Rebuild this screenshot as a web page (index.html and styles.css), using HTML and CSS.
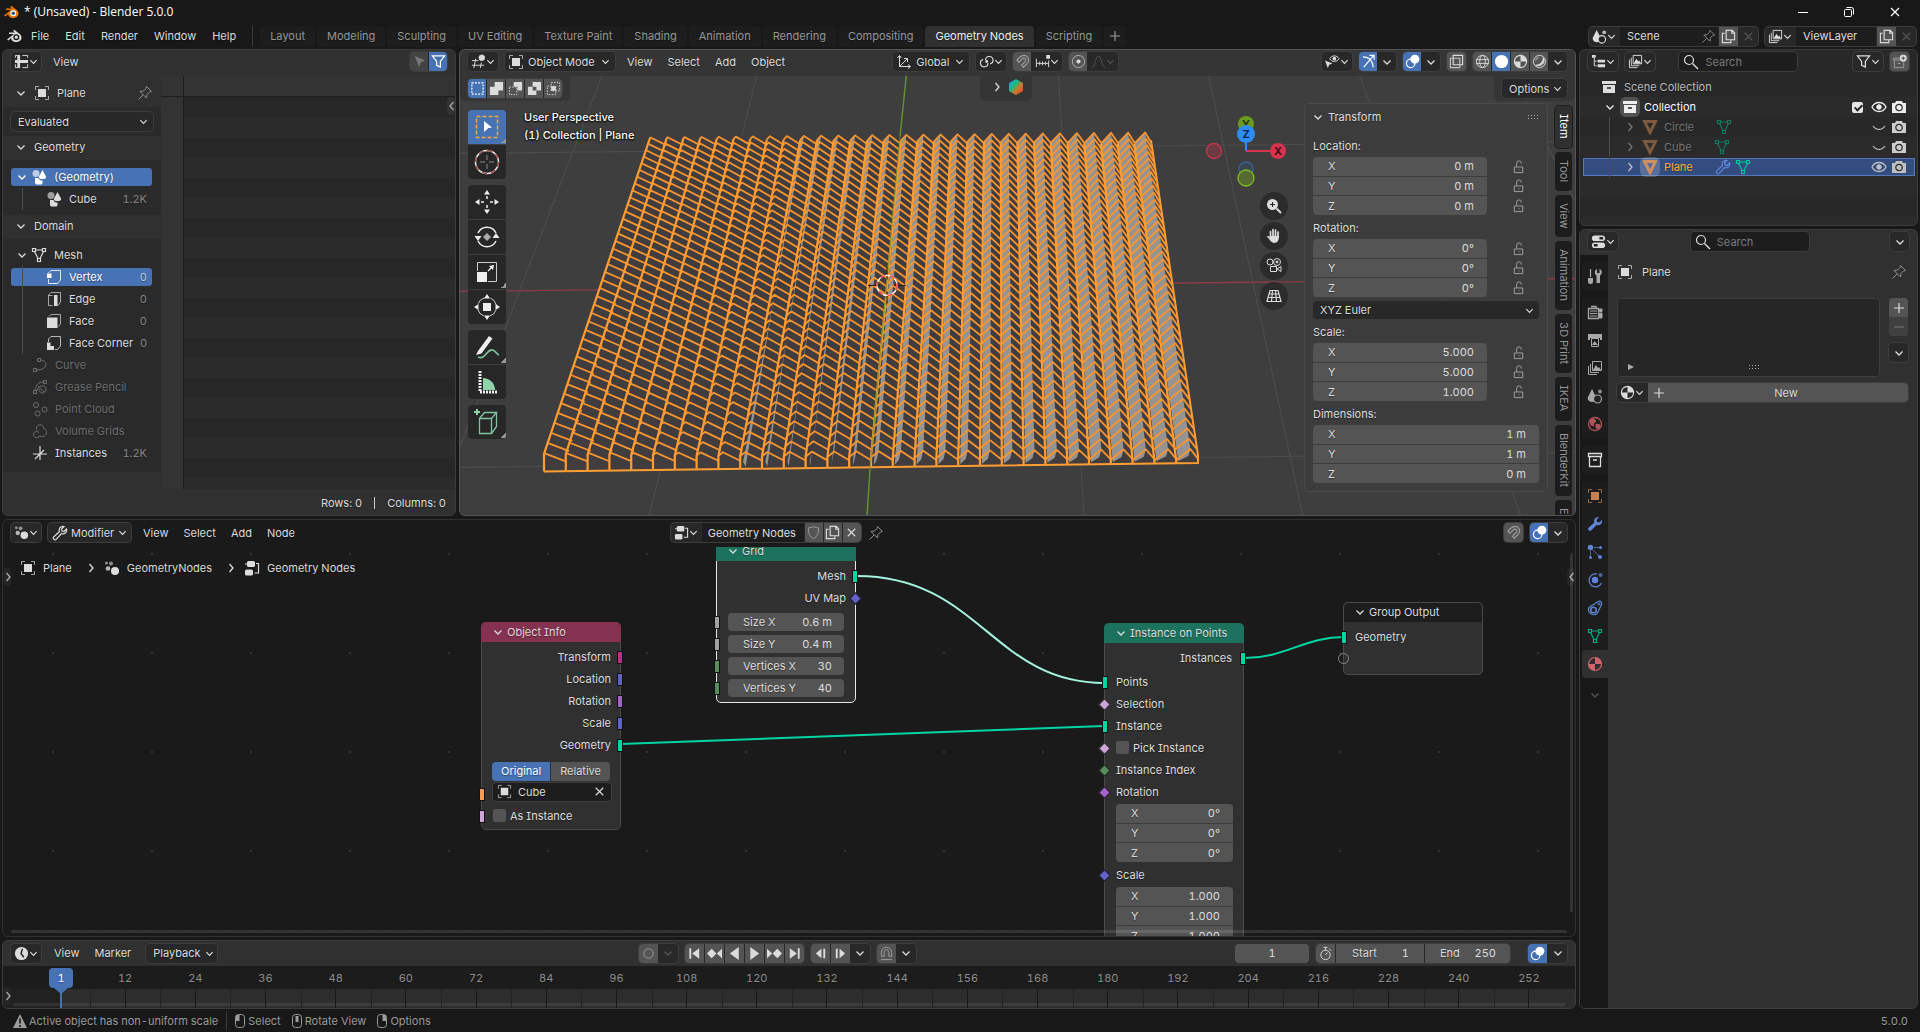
FILE: index.html
```html
<!DOCTYPE html>
<html lang="en">
<head>
<meta charset="utf-8">
<title>* (Unsaved) - Blender 5.0.0</title>
<link rel="stylesheet" href="styles.css">
</head>
<body>
<svg class="defs" aria-hidden="true">
<symbol id="chev" viewBox="0 0 10 10"><path d="M1.500 3.500 5 7l3.500-3.500" stroke-width="1.300"/></symbol>
<symbol id="right" viewBox="0 0 10 10"><path d="M3.500 1 7 5 3.500 9" stroke-width="1.300"/></symbol>
<symbol id="left" viewBox="0 0 10 10"><path d="M6.500 1 3 5l3.500 4" stroke-width="1.300"/></symbol>
<symbol id="blender" viewBox="0 0 16 16"><path d="M1 11.500 8 6H3V4.500h6L7 3l1.300-1.200 6 4.700c2.500 2.500 1.200 7.500-4 7.500-3.500 0-5-2-5.200-4L2.500 12.500z" fill="currentColor" stroke="none"/><circle cx="10.300" cy="9.200" r="3" fill="#181818" stroke="none"/><circle cx="10.300" cy="9.200" r="1.600" fill="currentColor" stroke="none"/></symbol>
<symbol id="logo" viewBox="0 0 16 16"><path d="M1 11.500 8 6H3V4.500h6L7 3l1.300-1.200 6 4.700c2.500 2.500 1.200 7.500-4 7.500-3.500 0-5-2-5.200-4L2.500 12.500z" fill="#ea7600" stroke="none"/><circle cx="10.300" cy="9.200" r="3" fill="#fff" stroke="none"/><circle cx="10.300" cy="9.200" r="1.800" fill="#265787" stroke="none"/></symbol>
<symbol id="obj" viewBox="0 0 16 16"><path d="M1.500 5V1.500H5M11 1.500h3.500V5M14.500 11v3.500H11M5 14.500H1.500V11" opacity=".7"/><path d="M4 4h8v8H4z" fill="currentColor" stroke="none"/></symbol>
<symbol id="pin" viewBox="0 0 16 16"><path d="M9.500 1.500 14.500 6.500 12.500 7 10 9.500 9.500 13 3 6.500 6.500 6 9 3.500zM6 10l-4.500 4.500"/></symbol>
<symbol id="sheet" viewBox="0 0 16 16"><path d="M1 6.500h14v3H6.500V15h-3V9.500H1zM3.500 1h3v6h-3z" fill="currentColor" stroke="none"/><path d="M1.500 4V1.500H4M9 1.500h5.500V4M14.500 11v3.500H9M1.500 11v3.500H4"/></symbol>
<symbol id="arrow" viewBox="0 0 16 16"><path d="M3 2l11 5-4.500 1.800L7.500 14z" fill="currentColor" stroke="none"/></symbol>
<symbol id="funnel" viewBox="0 0 16 16"><path d="M1.500 2h13L10 8v6l-4-2V8z" stroke-width="1.300"/></symbol>
<symbol id="geo" viewBox="0 0 16 16"><circle cx="5" cy="4.500" r="3.500" fill="currentColor" stroke="none" opacity=".65"/><path d="M11.500 1 15 7.500a2 2 0 0 1-2 2.500h-3a2 2 0 0 1-2-2.500zM4 9h3.500c.5 2 2 2.500 4 2.500V14a1.500 1.500 0 0 1-1.500 1.500H6A2 2 0 0 1 4 14z" fill="currentColor" stroke="none"/></symbol>
<symbol id="mesh" viewBox="0 0 16 16"><path d="M1.500 1.500h3v3h-3zM11.500 1.500h3v3h-3zM6.500 11.500h3v3h-3zM4.500 3h7M3.500 4.500l3.500 7M12.500 4.500l-3.500 7" stroke-width="1.200"/></symbol>
<symbol id="vert" viewBox="0 0 16 16"><path d="M5 1.500h9.500V11l-3 3.500h-9V10M2.500 4 5 1.500M8 14.500h3.500" opacity=".8"/><path d="M1 4.500h4.500V9H1z" fill="currentColor" stroke="none"/></symbol>
<symbol id="edge" viewBox="0 0 16 16"><path d="M2.500 14.500V4L5 1.500h9.500V11L12 14.500M6.500 4.500h-4M2.500 14.500h4" opacity=".7"/><path d="M8 4h3.500v11H8z" fill="currentColor" stroke="none"/></symbol>
<symbol id="face" viewBox="0 0 16 16"><path d="M3 3.500 5 1.500h9.500V11l-2 2.500" opacity=".7"/><path d="M1 4.500h10.500V15H1z" fill="currentColor" stroke="none"/></symbol>
<symbol id="corner" viewBox="0 0 16 16"><path d="M2.500 7V4L5 1.500h9.500V11l-3 3.500H9" opacity=".8"/><path d="M1 7.500h3.500V11H8v4H1z" fill="currentColor" stroke="none"/></symbol>
<symbol id="curve" viewBox="0 0 16 16"><path d="M1.500 11.500h3v3h-3zM5.500 1.500h3v3h-3zM8.500 3c8 .5 7.500 10-4 10"/></symbol>
<symbol id="gp" viewBox="0 0 16 16"><path d="M1.500 11.500h3v3h-3zM11.500 1.500h3v3h-3zM3 11.500C4 5 7 3 11.500 3M5 12c0-5 9-7.500 9-2s-7 5-7 0M6 7l6 6"/></symbol>
<symbol id="pc" viewBox="0 0 16 16"><circle cx="4" cy="4" r="2.500"/><circle cx="5.500" cy="12.500" r="2.500"/><circle cx="12.500" cy="8.500" r="2.500"/></symbol>
<symbol id="vol" viewBox="0 0 16 16"><path d="M4.500 7C3.500 0 12 .5 11.500 5.500c3.500 0 4 6 1 7.500-3 1.500-4.500 0-5 0-1 2.500-6 2-6-1.500C1.500 9 4 7.500 7 9.500"/></symbol>
<symbol id="inst" viewBox="0 0 16 16"><path d="M8 1v14M1 9h14M3 14l9-9" stroke-width="1.200"/></symbol>
<symbol id="view3d" viewBox="0 0 16 16"><path d="M1 7h7M1 12h13M5 5 3 15M11 9l-1 6"/><circle cx="11.500" cy="4" r="3" fill="currentColor"/></symbol>
<symbol id="orient" viewBox="0 0 16 16"><path d="M3.500 2v10.500H14M1.500 4l2-2.500 2 2.500M12 10.500l2.500 2-2.500 2M4 12l7-7M8 4.500h3.500V8"/></symbol>
<symbol id="pivot" viewBox="0 0 16 16"><path d="M7 6.500A4 4 0 1 1 12 10.500M9.500 9.500A4 4 0 1 1 4.500 5.800" stroke-width="1.200"/><circle cx="8.200" cy="8" r="1.500" fill="currentColor" stroke="none"/></symbol>
<symbol id="magnet" viewBox="0 0 16 16"><path d="M2 6.500 5 3.500C12-2 18 6 12.500 10.500L9 14l-2-2 3.500-3.500c3-3-.5-5.500-3-3L4 9z" stroke-width="1.200"/></symbol>
<symbol id="inc" viewBox="0 0 16 16"><path d="M1.500 5v9M14.500 7v7M1.500 10h13M5 8v4M8 8v4M11 8v4"/><path d="M12 1h4v4h-4z" fill="currentColor" stroke="none"/></symbol>
<symbol id="prop" viewBox="0 0 16 16"><circle cx="8" cy="8" r="6.500" opacity=".7"/><circle cx="8" cy="8" r="2.200" fill="currentColor" stroke="none"/></symbol>
<symbol id="fall" viewBox="0 0 16 16"><path d="M1 14c4 0 3.500-12 7-12s3 12 7 12"/></symbol>
<symbol id="vis" viewBox="0 0 16 16"><path d="M5 5c2-4 8-4 10 0-2 4-8 4-10 0z"/><circle cx="10" cy="5" r="2" fill="currentColor" stroke="none"/><path d="M0 7l8 3-3.500 1.500L3 15z" fill="currentColor" stroke="none"/></symbol>
<symbol id="giz" viewBox="0 0 16 16"><path d="M2 3c7 0 11 5 11 11M3 14 13 2M9 1.500h5V6" stroke-width="1.300"/></symbol>
<symbol id="over" viewBox="0 0 16 16"><circle cx="6" cy="10" r="4.500" stroke-width="1.300"/><circle cx="10.500" cy="5.500" r="4.800" fill="currentColor" stroke="none"/></symbol>
<symbol id="xray" viewBox="0 0 16 16"><path d="M4.500 1.500h10v10h-10z" stroke-width="1.200"/><path d="M1.500 4.500h10v10h-10z" stroke-width="1.200" opacity=".8"/></symbol>
<symbol id="wire" viewBox="0 0 16 16"><circle cx="8" cy="8" r="6.500"/><ellipse cx="8" cy="8" rx="3" ry="6.500"/><path d="M1.500 6h13M1.500 10h13"/></symbol>
<symbol id="solid" viewBox="0 0 16 16"><circle cx="8" cy="8" r="7" fill="currentColor" stroke="none"/></symbol>
<symbol id="mat" viewBox="0 0 16 16"><circle cx="8" cy="8" r="6.500" stroke-width="1.200"/><path d="M8 1.500a6.500 6.500 0 0 1 6.500 6.500H8zM8 8v6.500A6.500 6.500 0 0 1 1.500 8z" fill="currentColor" stroke="none"/></symbol>
<symbol id="rend" viewBox="0 0 16 16"><circle cx="8" cy="8" r="6.500"/><path d="M12 4c3 5-2 10-8 8 5 0 8-4 8-8z" fill="currentColor"/><path d="M4 7c0-2 2-3 3-3"/></symbol>
<symbol id="s1" viewBox="0 0 16 16"><path d="M2 2h12v12H2z" stroke-dasharray="2 1.400" stroke-width="1.300"/></symbol>
<symbol id="s2" viewBox="0 0 16 16"><path d="M6 1h9v9h-5v5H1V6h5z" fill="currentColor" stroke="none"/></symbol>
<symbol id="s3" viewBox="0 0 16 16"><path d="M6 1h9v9h-5V6H6z" fill="currentColor" stroke="none"/><path d="M1.500 6.500h8v8h-8z" stroke-dasharray="1.500 1.500"/></symbol>
<symbol id="s4" viewBox="0 0 16 16"><path d="M6 1h9v9h-5v5H1V6h5zM6 6v4h4V6z" fill="currentColor" fill-rule="evenodd" stroke="none"/></symbol>
<symbol id="s5" viewBox="0 0 16 16"><path d="M5.500 1.500h9v9h-9zM1.500 5.500h9v9h-9z" stroke-dasharray="1.500 1.500"/><path d="M5.500 5.500h5v5h-5z" fill="currentColor" stroke="none"/></symbol>
<symbol id="t-sel" viewBox="0 0 32 32"><path d="M5.500 5.500h21v21h-21z" stroke="#f5a83a" stroke-width="1.500" stroke-dasharray="4 2"/><path d="M13 10l8 6.500-3.500.5L13 21z" fill="#fff" stroke="none"/></symbol>
<symbol id="t-cur" viewBox="0 0 32 32"><circle cx="16" cy="16" r="11.500" stroke="#e8e8e8" stroke-width="1.500"/><circle cx="16" cy="16" r="11.500" stroke="#a04a4a" stroke-width="1.500" stroke-dasharray="5 4"/><path d="M16 9v5M16 18v5M9 16h5M18 16h5" stroke="#888"/></symbol>
<symbol id="t-move" viewBox="0 0 32 32"><path d="M16 4l3 4.500h-6zM16 28l3-4.500h-6zM4 16l4.500-3v6zM28 16l-4.500-3v6z" fill="#eee" stroke="none"/><path d="M16 10v3M16 19v3M10 16h3M19 16h3" stroke="#eee" stroke-width="1.500"/></symbol>
<symbol id="t-rot" viewBox="0 0 32 32"><path d="M7 12a10 10 0 0 1 18 0M25 20a10 10 0 0 1-18 0" stroke="#eee" stroke-width="1.500"/><path d="M7 20l-3.500-5h7zM25 12l3.500 5h-7z" fill="#eee" stroke="none"/><path d="M16 12l4 4-4 4-4-4z" fill="#aaa" stroke="none"/></symbol>
<symbol id="t-scl" viewBox="0 0 32 32"><path d="M6.500 15V6.500h19v19H17" stroke="#ccc"/><path d="M6 16h10v10H6z" fill="#eee" stroke="none"/><path d="M17 15l4-4" stroke="#eee" stroke-width="1.500"/><path d="M23 9l-1 5-4-4z" fill="#eee" stroke="none"/></symbol>
<symbol id="t-tr" viewBox="0 0 32 32"><circle cx="16" cy="16" r="9.500" stroke="#ccc" stroke-dasharray="9 6" stroke-dashoffset="-3"/><path d="M12 12h8v8h-8zM16 3l3 4.500h-6zM16 29l3-4.500h-6zM3 16l4.500-3v6zM29 16l-4.500-3v6z" fill="#eee" stroke="none"/></symbol>
<symbol id="t-ann" viewBox="0 0 32 32"><path d="M7 20 18 5l3.500 2.500-11 15L5 24z" fill="#eee" stroke="none"/><path d="M7 26c7 3 8-6 13-7 4-1 5 4 8 5" stroke="#7cc49c" stroke-width="1.800"/></symbol>
<symbol id="t-mea" viewBox="0 0 32 32"><path d="M9 5v21h18" stroke="#eee" stroke-width="3" stroke-dasharray="2 1"/><path d="M12 12a12 12 0 0 1 12 12H12z" fill="#8fd3ab" stroke="none"/></symbol>
<symbol id="t-add" viewBox="0 0 32 32"><path d="M8.500 12.500h12v15h-12zM8.500 12.500l5-6h12l-5 6M25.500 6.500v14l-5 7" stroke="#7fc4a0" stroke-width="1.300"/><path d="M6 3v6M3 6h6" stroke="#8fd3ab" stroke-width="2"/></symbol>
<symbol id="zoomin" viewBox="0 0 16 16"><circle cx="6.500" cy="6.500" r="5.500" fill="#ddd" stroke="none"/><path d="M10.500 10.500 15 15" stroke="#ddd" stroke-width="2"/><path d="M6.500 4v5M4 6.500h5" stroke="#222"/></symbol>
<symbol id="hand" viewBox="0 0 16 16"><path d="M4.500 9V3.500M7 8V1.500M9.500 8V2M12 8.500V4" stroke-width="1.700" stroke-linecap="round"/><path d="M3.700 8H13c0 4-1.500 7-4.500 7S4 12 1 8.500c1-1 2 0 2.700 1z" fill="currentColor" stroke="none"/></symbol>
<symbol id="cams" viewBox="0 0 16 16"><circle cx="4" cy="4" r="3"/><circle cx="11" cy="4" r="3.500"/><path d="M4.500 8.500h6v5h-6zM11 11l4-2.500v5z"/><circle cx="11" cy="4" r="1" fill="currentColor"/></symbol>
<symbol id="persp" viewBox="0 0 16 16"><path d="M4 2.500h8l3 11H1zM3 6h10M2 9.500h12M6.500 2.500l-1 11M9.500 2.500l1 11" stroke-width="1.200"/></symbol>
<symbol id="lock" viewBox="0 0 16 16"><path d="M3.500 8.500h9v6h-9zM6 8V4.500a2.500 2.500 0 0 1 5 0V5M8 11.500h1"/></symbol>
<symbol id="grip" viewBox="0 0 12 6"><path d="M1 1.500h11M1 4.500h11" stroke-dasharray="1 2"/></symbol>
<symbol id="scene" viewBox="0 0 16 16"><path d="M5 1l4 8c1 2-1 5-4 5s-5-3-4-5z" fill="currentColor" stroke="none"/><circle cx="10.500" cy="11" r="4" fill="#222" stroke-width="1.200"/><circle cx="13" cy="3.500" r="2" fill="currentColor" stroke="none" opacity=".8"/></symbol>
<symbol id="copy" viewBox="0 0 16 16"><path d="M5.500 1.500H12L14.500 4v7.500h-9zM11.500 1.500v3h3M4 4.500H1.500v10h9V12" stroke-width="1.200"/></symbol>
<symbol id="x" viewBox="0 0 16 16"><path d="M4 4l8 8M12 4l-8 8" stroke-width="1.200"/></symbol>
<symbol id="layers" viewBox="0 0 16 16"><path d="M5.500 1.500h9v9h-9zM3.500 4v8.500H12M1.500 6v8.500H10"/><path d="M6 10l3-5 2 3 1-1 2 3z" fill="currentColor" stroke="none"/></symbol>
<symbol id="outl" viewBox="0 0 16 16"><path d="M1 1h4v3H1zM7 6h8v3H7zM7 11h8v3H7z" fill="currentColor" stroke="none"/><path d="M3.500 4v8.500H6M3.500 7.500H6"/></symbol>
<symbol id="search" viewBox="0 0 16 16"><circle cx="6" cy="6" r="4.500" stroke-width="1.200"/><path d="M9.500 9.500 15 15" stroke-width="1.400"/></symbol>
<symbol id="newc" viewBox="0 0 16 16"><path d="M8 4.500H1.500v2H9M2.500 7v7.500h10V9M6 10h3"/><circle cx="12" cy="4.500" r="3.700" fill="#ddd" stroke="none"/><path d="M12 2.500v4M10 4.500h4" stroke="#444"/></symbol>
<symbol id="coll" viewBox="0 0 16 16"><path d="M1 2h14v3H1zM2 6h12v8H2z" fill="currentColor" stroke="none"/><path d="M6 9h4" stroke="#222" stroke-width="1.500"/></symbol>
<symbol id="collo" viewBox="0 0 16 16"><path d="M1.500 1.500h13v3h-13zM2.500 4.500v10h11v-10M6 8h4" stroke-width="1.300"/></symbol>
<symbol id="tri" viewBox="0 0 16 16"><path d="M2.500 2.500h11L8 13.500z" stroke-width="3"/></symbol>
<symbol id="wrench" viewBox="0 0 16 16"><path d="M12 1.500C8 1 6.500 4 7.500 6.500l-6 5.500c-1 2 1.500 3.500 2.700 2.300L9.500 8.500c2.500 1 6-1 5-4.500L12 6.500 10 6l-.5-2z" stroke-width="1.200"/></symbol>
<symbol id="wrenchf" viewBox="0 0 16 16"><path d="M12 1C8 .5 6.500 4 7.300 6.500l-6 5.500c-1 2 1.500 3.800 2.900 2.500L9.500 9c2.500 1 6.500-1 5.500-5L12 6.500 10 6l-.5-2z" fill="currentColor" stroke="none"/></symbol>
<symbol id="eye" viewBox="0 0 16 16"><path d="M1 8c3-6 11-6 14 0-3 6-11 6-14 0z" stroke-width="1.300"/><circle cx="8" cy="8" r="2.300" fill="currentColor"/></symbol>
<symbol id="eyec" viewBox="0 0 16 16"><path d="M2 7c3 4.500 9 4.500 12 0" stroke-width="1.200"/></symbol>
<symbol id="cam" viewBox="0 0 16 16"><path d="M5 2h6l1 2h3v10H1V4h3z" fill="currentColor" stroke="none"/><circle cx="8" cy="8.500" r="3.200" stroke="#2a2a2a" stroke-width="1.200"/></symbol>
<symbol id="props" viewBox="0 0 16 16"><rect x="1" y="1.500" width="14" height="6" rx="3" fill="currentColor" stroke="none"/><rect x="1" y="9" width="14" height="6" rx="3" fill="currentColor" stroke="none"/><path d="M9 4.500h4M3 12h4" stroke="#222" stroke-width="2.500"/></symbol>
<symbol id="tool" viewBox="0 0 16 16"><path d="M3.500 1v8" stroke-width="1.200"/><path d="M1 10h5v3.500a2.500 2.500 0 0 1-5 0zM10 1v4h2.500V1c3 1 3 5 .5 6.500V15h-3.500V7.500C7 6 7.500 2 10 1z" fill="currentColor" stroke="none"/></symbol>
<symbol id="rnd" viewBox="0 0 16 16"><path d="M1.500 4.500h10v10h-10zM4 2.500h5v2" stroke-width="1.300"/><path d="M3 7h7M3 9.500h7M3 12h7M12.500 5H15v2.500h-2.500zM12.500 9H15v5h-2.500z" fill="currentColor"/></symbol>
<symbol id="out" viewBox="0 0 16 16"><path d="M1 2h14v6h-2V6H3v2H1z" fill="currentColor" stroke="none"/><path d="M4.500 6.500h7v8h-7z"/><path d="M5 13l2.500-4 3.500 4z" fill="currentColor" stroke="none"/></symbol>
<symbol id="world" viewBox="0 0 16 16"><circle cx="8" cy="8" r="6.500" stroke-width="1.300"/><path d="M3 4l4-1 2 2-3 3 1 2-3-1zM9 8l4 1-1 4-3-1z" fill="currentColor"/></symbol>
<symbol id="part" viewBox="0 0 16 16"><circle cx="3.500" cy="3.500" r="2.700" fill="currentColor" stroke="none"/><path d="M3.500 7v6M7 3.500h6M5.500 5.500l7 7" opacity=".7"/><circle cx="13.500" cy="3.500" r="1.500" fill="currentColor" stroke="none"/><circle cx="3.500" cy="13.500" r="1.500" fill="currentColor" stroke="none"/><circle cx="13" cy="13" r="2" fill="currentColor" stroke="none"/></symbol>
<symbol id="phys" viewBox="0 0 16 16"><path d="M10 2A6.500 6.500 0 1 0 14.500 11" stroke-width="1.200"/><circle cx="8" cy="8" r="3.200" fill="currentColor" stroke="none"/><circle cx="13.500" cy="3" r="2" fill="currentColor" stroke="none" opacity=".7"/></symbol>
<symbol id="cons" viewBox="0 0 16 16"><path d="M2 7.500 11 1.500c3-1 4 1 3.500 3L10.500 13c-4 4-11 0-8.500-5.500z" stroke-width="1.200"/><circle cx="6.500" cy="10" r="2.800" stroke-width="1.600"/><circle cx="12" cy="4" r="1"/></symbol>
<symbol id="plus" viewBox="0 0 16 16"><path d="M8 3v10M3 8h10" stroke-width="1.200"/></symbol>
<symbol id="minus" viewBox="0 0 16 16"><path d="M3 8h10"/></symbol>
<symbol id="gn" viewBox="0 0 16 16"><circle cx="11" cy="11" r="4" fill="currentColor" stroke="none"/><circle cx="4" cy="8.500" r="2.300" fill="currentColor" stroke="none" opacity=".8"/><circle cx="2.500" cy="3" r="1.500" fill="currentColor" stroke="none" opacity=".6"/><circle cx="7" cy="3.500" r="2" fill="currentColor" stroke="none" opacity=".6"/></symbol>
<symbol id="tree" viewBox="0 0 16 16"><rect x="3" y="1" width="8" height="6" rx="1.500" fill="currentColor" stroke="none"/><rect x="1" y="9.500" width="8" height="6" rx="1.500" fill="currentColor" stroke="none"/><path d="M12 3.500h2.500v9.500H10.500M1 4h2" stroke-width="1.200"/></symbol>
<symbol id="shield" viewBox="0 0 16 16"><path d="M8 1.500C6 3 4 3 2.500 3c0 6 1.500 9.500 5.500 11.500 4-2 5.500-5.500 5.500-11.500C12 3 10 3 8 1.500z"/></symbol>
<symbol id="clock" viewBox="0 0 16 16"><circle cx="8" cy="8" r="7" fill="currentColor" stroke="none"/><path d="M9 3 7.500 8l3 4" stroke="#222" stroke-width="1.500"/></symbol>
<symbol id="rec" viewBox="0 0 16 16"><circle cx="8" cy="8" r="5"/></symbol>
<symbol id="p1" viewBox="0 0 16 16"><path d="M2.500 2.500h2v11h-2zM13 2.500v11L5.500 8z" fill="currentColor" stroke="none"/></symbol>
<symbol id="p2" viewBox="0 0 16 16"><path d="M5 3l5 5-5 5-5-5zM16 3v10l-5.500-5z" fill="currentColor" stroke="none"/></symbol>
<symbol id="p3" viewBox="0 0 16 16"><path d="M12.500 1v14L3 8z" fill="currentColor" stroke="none"/></symbol>
<symbol id="p4" viewBox="0 0 16 16"><path d="M3.500 1v14L13 8z" fill="currentColor" stroke="none"/></symbol>
<symbol id="p5" viewBox="0 0 16 16"><path d="M11 3l5 5-5 5-5-5zM0 3v10l5.500-5z" fill="currentColor" stroke="none"/></symbol>
<symbol id="p6" viewBox="0 0 16 16"><path d="M11.500 2.500h2v11h-2zM3 2.500v11L10.500 8z" fill="currentColor" stroke="none"/></symbol>
<symbol id="p7" viewBox="0 0 16 16"><path d="M9 3v10L3 8zM11 3h2v10h-2z" fill="currentColor" stroke="none"/></symbol>
<symbol id="p8" viewBox="0 0 16 16"><path d="M7 3v10l6-5zM3 3h2v10H3z" fill="currentColor" stroke="none"/></symbol>
<symbol id="msnap" viewBox="0 0 16 16"><path d="M2.500 11V7C2.500-.5 13.500-.5 13.500 7v4h-3V7c0-4-5-4-5 0v4zM2 14.500h12"/></symbol>
<symbol id="stopw" viewBox="0 0 16 16"><circle cx="8" cy="9.500" r="5"/><path d="M6 1.500h4M8 1.500v3M8 9.500l2-2.500M12 3l2 2"/></symbol>
<symbol id="warn" viewBox="0 0 16 16"><path d="M8 1l7 14H1z" fill="currentColor" stroke="none"/><path d="M8 5.500v5M8 12v2" stroke="#181818" stroke-width="1.600"/></symbol>
<symbol id="m1" viewBox="0 0 12 16"><rect x="1.500" y="1.500" width="9" height="13" rx="3"/><path d="M2 2h3.500v6H2z" fill="currentColor" stroke="none"/></symbol>
<symbol id="m2" viewBox="0 0 12 16"><rect x="1.500" y="1.500" width="9" height="13" rx="3"/><path d="M4.500 3h3v6h-3z" fill="currentColor" stroke="none"/></symbol>
<symbol id="m3" viewBox="0 0 12 16"><rect x="1.500" y="1.500" width="9" height="13" rx="3"/><path d="M6.500 2H10v6H6.500z" fill="currentColor" stroke="none"/></symbol>
<symbol id="wmin" viewBox="0 0 16 16"><path d="M3 8.500h10"/></symbol>
<symbol id="wres" viewBox="0 0 16 16"><rect x="3.500" y="5.500" width="7" height="7" rx="1"/><path d="M5.500 3.500h5a2 2 0 0 1 2 2v5"/></symbol>
<symbol id="play" viewBox="0 0 10 10"><path d="M2 2l6 3-6 3z" fill="currentColor" stroke="none"/></symbol>
</svg>

<header class="title">
  <svg class="ic"><use href="#logo"/></svg><h1>* (Unsaved) - Blender 5.0.0</h1><i class="sp"></i>
  <button aria-label="Minimize"><svg class="ic"><use href="#wmin"/></svg></button>
  <button aria-label="Restore"><svg class="ic"><use href="#wres"/></svg></button>
  <button aria-label="Close"><svg class="ic"><use href="#x"/></svg></button>
</header>

<nav class="top">
  <svg class="ic"><use href="#blender"/></svg>
  <div class="menus"><button>File</button><button>Edit</button><button>Render</button><button>Window</button><button>Help</button></div>
  <i class="rule"></i>
  <div class="tabs"><button>Layout</button><button>Modeling</button><button>Sculpting</button><button>UV Editing</button><button>Texture Paint</button><button>Shading</button><button>Animation</button><button>Rendering</button><button>Compositing</button><button class="on">Geometry Nodes</button><button>Scripting</button><button class="add" aria-label="Add workspace"><svg class="ic"><use href="#plus"/></svg></button></div>
  <i class="sp"></i>
  <div class="grp"><button class="ib" aria-label="Browse scene"><svg class="ic"><use href="#scene"/></svg><svg class="ch"><use href="#chev"/></svg></button><input class="name scene" value="Scene" aria-label="Scene name"><button class="b in" aria-label="Pin scene"><svg class="ic dim"><use href="#pin"/></svg></button><button class="b g" aria-label="New scene"><svg class="ic"><use href="#copy"/></svg></button><button class="b off" aria-label="Delete scene"><svg class="ic"><use href="#x"/></svg></button></div>
  <div class="grp"><button class="ib" aria-label="Browse view layer"><svg class="ic"><use href="#layers"/></svg><svg class="ch"><use href="#chev"/></svg></button><input class="name layer" value="ViewLayer" aria-label="View layer name"><button class="b g" aria-label="New view layer"><svg class="ic"><use href="#copy"/></svg></button><button class="b off" aria-label="Delete view layer"><svg class="ic"><use href="#x"/></svg></button></div>
</nav>

<main>
<div class="left">
<div class="upper">
  <section class="area sheet">
    <div class="hd"><button class="ib box" aria-label="Editor type"><svg class="ic"><use href="#sheet"/></svg><svg class="ch"><use href="#chev"/></svg></button><div class="menus"><button>View</button></div><i class="sp"></i>
      <div class="grp"><button class="b mut" aria-label="Selected only"><svg class="ic"><use href="#arrow"/></svg></button><button class="b on" aria-label="Filter"><svg class="ic"><use href="#funnel"/></svg></button></div></div>
    <div class="sheetbody">
      <aside>
        <h2 class="tall"><svg class="ch"><use href="#chev"/></svg><svg class="ic"><use href="#obj"/></svg><span>Plane</span><i class="sp"></i><svg class="ic dim"><use href="#pin"/></svg></h2>
        <div class="sec"><label class="dd"><select aria-label="Object evaluation state"><option>Evaluated</option></select><svg class="ch"><use href="#chev"/></svg></label></div>
        <h2><svg class="ch"><use href="#chev"/></svg><span>Geometry</span></h2>
        <ul class="sec geo">
          <li class="sel"><svg class="ch"><use href="#chev"/></svg><svg class="ic"><use href="#geo"/></svg>(Geometry)</li>
          <li class="l2"><svg class="ic"><use href="#geo"/></svg>Cube<b>1.2K</b></li>
        </ul>
        <h2><svg class="ch"><use href="#chev"/></svg><span>Domain</span></h2>
        <ul class="sec dom">
          <li><svg class="ch"><use href="#chev"/></svg><svg class="ic"><use href="#mesh"/></svg>Mesh</li>
          <li class="l2 sel"><svg class="ic"><use href="#vert"/></svg>Vertex<b>0</b></li>
          <li class="l2"><svg class="ic"><use href="#edge"/></svg>Edge<b>0</b></li>
          <li class="l2"><svg class="ic"><use href="#face"/></svg>Face<b>0</b></li>
          <li class="l2"><svg class="ic"><use href="#corner"/></svg>Face Corner<b>0</b></li>
          <li class="l1 no"><svg class="ic"><use href="#curve"/></svg>Curve</li>
          <li class="l1 no"><svg class="ic"><use href="#gp"/></svg>Grease Pencil</li>
          <li class="l1 no"><svg class="ic"><use href="#pc"/></svg>Point Cloud</li>
          <li class="l1 no"><svg class="ic"><use href="#vol"/></svg>Volume Grids</li>
          <li class="l1"><svg class="ic"><use href="#inst"/></svg>Instances<b>1.2K</b></li>
        </ul>
      </aside>
      <div class="grid"><div class="cols"></div><div class="rows"><button class="flap r" aria-label="Show sidebar"><svg class="ch"><use href="#left"/></svg></button></div></div>
    </div>
    <footer><span>Rows: 0</span><i class="bar"></i><span>Columns: 0</span></footer>
  </section>

  <section class="area view">
    <svg class="scene3d" viewBox="460 50 1115 466" preserveAspectRatio="xMidYMid slice" role="img" aria-label="3D scene">
      <g stroke="#4c4c4c" stroke-width="1.200">
        <path d="M459 154 1576 142M459 468 1576 453M612 50 460 447M763 50 649 517M1057 50 1084 517M1203 50 1303 517M1350 50 1521 517M1500 50 1574 200" fill="none"/>
      </g>
      <path d="M459 292 1576 279" stroke="#8e3b48" stroke-width="1.300"/>
      <g id="mesh3d"></g>
      <path d="M909 50 900 137M870 469 867 517" stroke="#64902a" stroke-width="1.500"/>
      <path d="M900 137 870 469" stroke="#64902a" stroke-width="1.200" opacity=".7"/>
      <g fill="none"><path d="M868 286h12M894 286h12M887 268v12M887 292v12" stroke="#2a1a10"/><circle cx="887" cy="286" r="10" stroke="#fff" stroke-width="1.300"/><circle cx="887" cy="286" r="10" stroke="#f33" stroke-width="1.300" stroke-dasharray="5 5"/></g>
    </svg>
    <div class="hd"><button class="ib box" aria-label="Editor type"><svg class="ic"><use href="#view3d"/></svg><svg class="ch"><use href="#chev"/></svg></button><label class="dd mode"><svg class="ic"><use href="#obj"/></svg><select aria-label="Mode"><option>Object Mode</option></select><svg class="ch"><use href="#chev"/></svg></label>
      <div class="menus"><button>View</button><button>Select</button><button>Add</button><button>Object</button></div><i class="sp five"></i>
      <label class="dd orient"><svg class="ic"><use href="#orient"/></svg><select aria-label="Transform orientation"><option>Global</option></select><svg class="ch"><use href="#chev"/></svg></label>
      <button class="ib box" aria-label="Pivot point"><svg class="ic"><use href="#pivot"/></svg><svg class="ch"><use href="#chev"/></svg></button>
      <div class="grp"><button class="b g mut2" aria-label="Snap"><svg class="ic"><use href="#magnet"/></svg></button><button class="ib" aria-label="Snap to"><svg class="ic"><use href="#inc"/></svg><svg class="ch"><use href="#chev"/></svg></button></div>
      <div class="grp"><button class="b g" aria-label="Proportional editing"><svg class="ic"><use href="#prop"/></svg></button><button class="ib off" aria-label="Falloff"><svg class="ic"><use href="#fall"/></svg><svg class="ch"><use href="#chev"/></svg></button></div>
      <i class="sp eleven"></i>
      <button class="ib box" aria-label="Visibility"><svg class="ic"><use href="#vis"/></svg><svg class="ch"><use href="#chev"/></svg></button>
      <div class="grp"><button class="b on" aria-label="Gizmos"><svg class="ic"><use href="#giz"/></svg></button><button class="b" aria-label="Gizmo options"><svg class="ch"><use href="#chev"/></svg></button></div>
      <div class="grp"><button class="b on" aria-label="Overlays"><svg class="ic"><use href="#over"/></svg></button><button class="b" aria-label="Overlay options"><svg class="ch"><use href="#chev"/></svg></button></div>
      <button class="b g solo" aria-label="X-ray"><svg class="ic"><use href="#xray"/></svg></button>
      <div class="grp"><button class="b g" aria-label="Wireframe"><svg class="ic"><use href="#wire"/></svg></button><button class="b on" aria-label="Solid"><svg class="ic"><use href="#solid"/></svg></button><button class="b g" aria-label="Material preview"><svg class="ic"><use href="#mat"/></svg></button><button class="b g" aria-label="Rendered"><svg class="ic"><use href="#rend"/></svg></button><button class="b" aria-label="Shading options"><svg class="ch"><use href="#chev"/></svg></button></div>
    </div>
    <div class="hd2">
      <div class="pl"><div class="grp"><button class="b on" aria-label="Set"><svg class="ic"><use href="#s1"/></svg></button><button class="b g" aria-label="Extend"><svg class="ic"><use href="#s2"/></svg></button><button class="b g" aria-label="Subtract"><svg class="ic"><use href="#s3"/></svg></button><button class="b g" aria-label="Invert"><svg class="ic"><use href="#s4"/></svg></button><button class="b g" aria-label="Intersect"><svg class="ic"><use href="#s5"/></svg></button></div></div>
      <i class="sp eight"></i>
      <div class="pl mid"><svg class="ch"><use href="#right"/></svg><svg class="ic" viewBox="0 0 16 16"><defs><linearGradient id="hx" x1="0" y1="0" x2="1" y2="1"><stop offset="0" stop-color="#1aa0ff"/><stop offset=".4" stop-color="#20b878"/><stop offset=".6" stop-color="#c08030"/><stop offset="1" stop-color="#ff3020"/></linearGradient></defs><path d="M8 0l7 4v8l-7 4-7-4V4z" fill="url(#hx)" stroke="none"/></svg></div>
      <i class="sp nine"></i>
      <div class="pl"><button class="dd opt">Options<svg class="ch"><use href="#chev"/></svg></button></div>
    </div>
    <div class="vbody">
      <div class="tools">
        <div><button class="on" aria-label="Select box"><svg><use href="#t-sel"/></svg></button><button aria-label="Cursor"><svg><use href="#t-cur"/></svg></button></div>
        <div><button aria-label="Move"><svg><use href="#t-move"/></svg></button><button aria-label="Rotate"><svg><use href="#t-rot"/></svg></button><button class="more" aria-label="Scale"><svg><use href="#t-scl"/></svg></button><button aria-label="Transform"><svg><use href="#t-tr"/></svg></button></div>
        <div><button class="more" aria-label="Annotate"><svg><use href="#t-ann"/></svg></button><button aria-label="Measure"><svg><use href="#t-mea"/></svg></button></div>
        <div><button class="more" aria-label="Add cube"><svg><use href="#t-add"/></svg></button></div>
      </div>
      <div class="info"><p>User Perspective</p><p>(1) Collection | Plane</p></div>
      <i class="sp"></i>
      <div class="nav">
        <svg class="gz" viewBox="0 0 84 80"><g fill="none" stroke-width="2"><path d="M42 40V23" stroke="#2e8df5"/><path d="M42 40h28" stroke="#d5334e"/></g><circle cx="42" cy="13" r="8" fill="#6c9a1f"/><text x="42" y="17" fill="#20300a">Y</text><circle cx="42" cy="23" r="9" fill="#2e8df5"/><text x="42" y="27" fill="#0c2340">Z</text><circle cx="74" cy="40" r="8" fill="#d5334e"/><text x="74" y="44" fill="#30080f">X</text><circle cx="10" cy="40" r="7.500" fill="#6c3a42" stroke="#c8334d" stroke-width="1.300"/><circle cx="42" cy="58" r="7" fill="#3a4452" stroke="#37659c" stroke-width="1.300"/><circle cx="42" cy="67" r="8" fill="#556a30" stroke="#7fbf1f" stroke-width="1.300"/></svg>
        <button aria-label="Zoom"><svg class="ic"><use href="#zoomin"/></svg></button><button aria-label="Pan"><svg class="ic"><use href="#hand"/></svg></button><button aria-label="Camera view"><svg class="ic"><use href="#cams"/></svg></button><button aria-label="Perspective"><svg class="ic"><use href="#persp"/></svg></button>
      </div>
      <div class="npanel">
        <h2><svg class="ch"><use href="#chev"/></svg>Transform<i class="sp"></i><svg class="grip"><use href="#grip"/></svg></h2>
        <h3>Location:</h3>
        <div class="tri"><div class="vec"><label>X<input value="0 m"></label><label>Y<input value="0 m"></label><label>Z<input value="0 m"></label></div><div class="locks"><svg class="ic"><use href="#lock"/></svg><svg class="ic"><use href="#lock"/></svg><svg class="ic"><use href="#lock"/></svg></div></div>
        <h3>Rotation:</h3>
        <div class="tri"><div class="vec"><label>X<input value="0°"></label><label>Y<input value="0°"></label><label>Z<input value="0°"></label></div><div class="locks"><svg class="ic"><use href="#lock"/></svg><svg class="ic"><use href="#lock"/></svg><svg class="ic"><use href="#lock"/></svg></div></div>
        <label class="dd euler"><select aria-label="Rotation mode"><option>XYZ Euler</option></select><svg class="ch"><use href="#chev"/></svg></label>
        <h3>Scale:</h3>
        <div class="tri"><div class="vec"><label>X<input value="5.000"></label><label>Y<input value="5.000"></label><label>Z<input value="1.000"></label></div><div class="locks"><svg class="ic"><use href="#lock"/></svg><svg class="ic"><use href="#lock"/></svg><svg class="ic"><use href="#lock"/></svg></div></div>
        <h3>Dimensions:</h3>
        <div class="vec"><label>X<input value="1 m"></label><label>Y<input value="1 m"></label><label>Z<input value="0 m"></label></div>
      </div>
      <div class="vtabs"><button class="on">Item</button><button>Tool</button><button>View</button><button>Animation</button><button>3D Print</button><button>IKEA</button><button>BlenderKit</button><button>Edit</button></div>
    </div>
  </section>
</div>

<section class="area nodes">
  <div class="hd"><button class="ib box" aria-label="Editor type"><svg class="ic"><use href="#gn"/></svg><svg class="ch"><use href="#chev"/></svg></button><label class="dd modi"><svg class="ic"><use href="#wrench"/></svg><select aria-label="Tree type"><option>Modifier</option></select><svg class="ch"><use href="#chev"/></svg></label>
    <div class="menus"><button>View</button><button>Select</button><button>Add</button><button>Node</button></div><i class="sp seven"></i>
    <div class="grp"><button class="ib" aria-label="Browse node tree"><svg class="ic"><use href="#tree"/></svg><svg class="ch"><use href="#chev"/></svg></button><input class="name gname" value="Geometry Nodes" aria-label="Node tree name"><button class="b g mut2" aria-label="Fake user"><svg class="ic"><use href="#shield"/></svg></button><button class="b g" aria-label="New node tree"><svg class="ic"><use href="#copy"/></svg></button><button class="b g" aria-label="Unlink"><svg class="ic"><use href="#x"/></svg></button></div>
    <button class="plain" aria-label="Pin"><svg class="ic dim"><use href="#pin"/></svg></button><i class="sp twelve"></i>
    <button class="b g solo mut2" aria-label="Snap"><svg class="ic"><use href="#magnet"/></svg></button>
    <div class="grp"><button class="b on" aria-label="Overlays"><svg class="ic"><use href="#over"/></svg></button><button class="b" aria-label="Overlay options"><svg class="ch"><use href="#chev"/></svg></button></div>
  </div>
  <div class="canvas">
    <svg class="wires" aria-hidden="true"><defs><pattern id="dots" x="49" y="6" width="99" height="99" patternUnits="userSpaceOnUse"><path d="M0 1h2" stroke="#333" stroke-width="2"/><path d="M20 1h80M0 21h100M0 41h100M0 60h100M0 80h100" stroke="#242424" stroke-width="1" stroke-dasharray="1 18.800"/></pattern></defs><rect width="100%" height="100%" fill="url(#dots)"/>
      <g fill="none" stroke-width="2"><path d="M854 29C976 29 990 136 1101 136" stroke="#a5f3df"/><path d="M618 197 1101 179" stroke="#00d6a3"/><path d="M1242 111C1282 111 1302 90 1341 90" stroke="#00d6a3"/></g></svg>
    <nav class="crumb"><svg class="ic"><use href="#obj"/></svg><span>Plane</span><svg class="ch"><use href="#right"/></svg><svg class="ic"><use href="#gn"/></svg><span>GeometryNodes</span><svg class="ch"><use href="#right"/></svg><svg class="ic"><use href="#tree"/></svg><span>Geometry Nodes</span></nav>
    <button class="flap lf" aria-label="Show toolbar"><svg class="ch"><use href="#right"/></svg></button>
    <button class="flap rt" aria-label="Show sidebar"><svg class="ch"><use href="#left"/></svg></button>

    <article class="node n-obj"><h4 class="pink"><svg class="ch"><use href="#chev"/></svg>Object Info</h4>
      <p class="o">Transform<i class="sk" style="--c:#b8308a"></i></p><p class="o">Location<i class="sk" style="--c:#6363c7"></i></p><p class="o">Rotation<i class="sk" style="--c:#a663c7"></i></p><p class="o">Scale<i class="sk" style="--c:#6363c7"></i></p><p class="o">Geometry<i class="sk" style="--c:#00d6a3"></i></p>
      <div class="seg"><button class="on">Original</button><button>Relative</button></div>
      <div class="row"><i class="sk" style="--c:#ed9e5c"></i><button class="pick"><svg class="ic"><use href="#obj"/></svg>Cube<i class="sp"></i><svg class="ic"><use href="#x"/></svg></button></div>
      <p><i class="sk" style="--c:#cca6d6"></i><label class="ck"><input type="checkbox">As Instance</label></p>
    </article>

    <article class="node n-grid"><h4 class="green"><svg class="ch"><use href="#chev"/></svg>Grid</h4>
      <p class="o">Mesh<i class="sk" style="--c:#00d6a3"></i></p><p class="o">UV Map<i class="sk di" style="--c:#6363c7"></i></p>
      <div class="flds"><div class="row"><i class="sk" style="--c:#a1a1a1"></i><label class="fld">Size X<input value="0.6 m"></label></div><div class="row"><i class="sk" style="--c:#a1a1a1"></i><label class="fld">Size Y<input value="0.4 m"></label></div><div class="row"><i class="sk" style="--c:#598c5c"></i><label class="fld">Vertices X<input value="30"></label></div><div class="row"><i class="sk" style="--c:#598c5c"></i><label class="fld">Vertices Y<input value="40"></label></div></div>
    </article>

    <article class="node n-inst"><h4 class="green"><svg class="ch"><use href="#chev"/></svg>Instance on Points</h4>
      <p class="o first">Instances<i class="sk" style="--c:#00d6a3"></i></p>
      <p>Points<i class="sk" style="--c:#00d6a3"></i></p><p>Selection<i class="sk di" style="--c:#cca6d6"></i></p><p>Instance<i class="sk" style="--c:#00d6a3"></i></p><p><i class="sk di" style="--c:#cca6d6"></i><label class="ck"><input type="checkbox">Pick Instance</label></p><p>Instance Index<i class="sk di" style="--c:#598c5c"></i></p><p>Rotation<i class="sk di" style="--c:#a663c7"></i></p>
      <div class="vec"><label>X<input value="0°"></label><label>Y<input value="0°"></label><label>Z<input value="0°"></label></div>
      <p>Scale<i class="sk di" style="--c:#6363c7"></i></p>
      <div class="vec"><label>X<input value="1.000"></label><label>Y<input value="1.000"></label><label>Z<input value="1.000"></label></div>
    </article>

    <article class="node n-out"><h4 class="black"><svg class="ch"><use href="#chev"/></svg>Group Output</h4><p>Geometry<i class="sk" style="--c:#00d6a3"></i></p><p><i class="sk ring"></i></p></article>
    <i class="sb v"></i><i class="sb h"></i>
  </div>
</section>

<section class="area time">
  <div class="hd"><button class="ib box" aria-label="Editor type"><svg class="ic"><use href="#clock"/></svg><svg class="ch"><use href="#chev"/></svg></button><div class="menus"><button>View</button><button>Marker</button></div><button class="dd play">Playback<svg class="ch"><use href="#chev"/></svg></button><i class="sp four"></i>
    <div class="grp"><button class="b g mut2" aria-label="Auto keying"><svg class="ic"><use href="#rec"/></svg></button><button class="b off" aria-label="Keying options"><svg class="ch"><use href="#chev"/></svg></button></div>
    <div class="grp"><button class="b g" aria-label="First frame"><svg class="ic"><use href="#p1"/></svg></button><button class="b g" aria-label="Previous keyframe"><svg class="ic"><use href="#p2"/></svg></button><button class="b g" aria-label="Play reverse"><svg class="ic"><use href="#p3"/></svg></button><button class="b g" aria-label="Play"><svg class="ic"><use href="#p4"/></svg></button><button class="b g" aria-label="Next keyframe"><svg class="ic"><use href="#p5"/></svg></button><button class="b g" aria-label="Last frame"><svg class="ic"><use href="#p6"/></svg></button></div>
    <div class="grp"><button class="b g" aria-label="Step back"><svg class="ic"><use href="#p7"/></svg></button><button class="b g" aria-label="Step forward"><svg class="ic"><use href="#p8"/></svg></button><button class="b" aria-label="Step options"><svg class="ch"><use href="#chev"/></svg></button></div>
    <div class="grp"><button class="b g mut2" aria-label="Snap"><svg class="ic"><use href="#msnap"/></svg></button><button class="b" aria-label="Snap options"><svg class="ch"><use href="#chev"/></svg></button></div>
    <i class="sp three"></i>
    <input class="frame" value="1" aria-label="Current frame">
    <div class="grp rng"><button class="b g" aria-label="Preview range"><svg class="ic"><use href="#stopw"/></svg></button><label>Start<input value="1"></label><label>End<input value="250"></label></div>
    <div class="grp tov"><button class="b on" aria-label="Overlays"><svg class="ic"><use href="#over"/></svg></button><button class="b" aria-label="Overlay options"><svg class="ch"><use href="#chev"/></svg></button></div>
  </div>
  <div class="ruler"><span>12</span><span>24</span><span>36</span><span>48</span><span>60</span><span>72</span><span>84</span><span>96</span><span>108</span><span>120</span><span>132</span><span>144</span><span>156</span><span>168</span><span>180</span><span>192</span><span>204</span><span>216</span><span>228</span><span>240</span><span>252</span></div>
  <button class="head">1</button>
  <button class="flap tl" aria-label="Show channels"><svg class="ch"><use href="#right"/></svg></button>
</section>
</div>

<div class="rightcol">
<section class="area outliner">
  <div class="hd"><button class="ib box" aria-label="Editor type"><svg class="ic"><use href="#outl"/></svg><svg class="ch"><use href="#chev"/></svg></button><button class="ib box" aria-label="Display mode"><svg class="ic"><use href="#layers"/></svg><svg class="ch"><use href="#chev"/></svg></button><i class="sp"></i><label class="search"><svg class="ic"><use href="#search"/></svg><input placeholder="Search" aria-label="Search outliner"></label><i class="sp four"></i><button class="ib box" aria-label="Filter"><svg class="ic"><use href="#funnel"/></svg><svg class="ch"><use href="#chev"/></svg></button><button class="b g solo mut2" aria-label="New collection"><svg class="ic"><use href="#newc"/></svg></button></div>
  <ul>
    <li class="d0"><svg class="ic"><use href="#coll"/></svg>Scene Collection</li>
    <li class="d1"><svg class="ch"><use href="#chev"/></svg><svg class="ic box2"><use href="#coll"/></svg><span class="w">Collection</span><i class="sp"></i><input type="checkbox" class="tick" checked aria-label="Include collection"><svg class="ic"><use href="#eye"/></svg><svg class="ic"><use href="#cam"/></svg></li>
    <li class="d2 hid"><svg class="ch"><use href="#right"/></svg><svg class="ic or"><use href="#tri"/></svg><span>Circle</span><svg class="ic gr m1"><use href="#mesh"/></svg><i class="sp"></i><svg class="ic"><use href="#eyec"/></svg><svg class="ic cm"><use href="#cam"/></svg></li>
    <li class="d2 hid"><svg class="ch"><use href="#right"/></svg><svg class="ic or"><use href="#tri"/></svg><span>Cube</span><svg class="ic gr m1"><use href="#mesh"/></svg><i class="sp"></i><svg class="ic"><use href="#eyec"/></svg><svg class="ic cm"><use href="#cam"/></svg></li>
    <li class="d2 sel"><svg class="ch"><use href="#right"/></svg><svg class="ic or box2"><use href="#tri"/></svg><span class="act">Plane</span><svg class="ic bl m1"><use href="#wrench"/></svg><svg class="ic gr"><use href="#mesh"/></svg><i class="sp"></i><svg class="ic"><use href="#eye"/></svg><svg class="ic"><use href="#cam"/></svg></li>
  </ul>
</section>
<section class="area propsed">
  <div class="hd"><button class="ib box" aria-label="Editor type"><svg class="ic"><use href="#props"/></svg><svg class="ch"><use href="#chev"/></svg></button><i class="sp seven"></i><label class="search"><svg class="ic"><use href="#search"/></svg><input placeholder="Search" aria-label="Search properties"></label><i class="sp eight"></i><button class="b solo" aria-label="Options"><svg class="ch"><use href="#chev"/></svg></button></div>
  <div class="pbody">
    <nav class="ptabs">
      <div><button aria-label="Tool"><svg class="ic"><use href="#tool"/></svg></button></div>
      <div><button aria-label="Render"><svg class="ic"><use href="#rnd"/></svg></button><button aria-label="Output"><svg class="ic"><use href="#out"/></svg></button><button aria-label="View layer"><svg class="ic"><use href="#layers"/></svg></button><button aria-label="Scene"><svg class="ic"><use href="#scene"/></svg></button><button class="red" aria-label="World"><svg class="ic"><use href="#world"/></svg></button></div>
      <div><button class="wh" aria-label="Collection"><svg class="ic"><use href="#collo"/></svg></button></div>
      <div><button class="org" aria-label="Object"><svg class="ic"><use href="#obj"/></svg></button><button class="blu" aria-label="Modifiers"><svg class="ic"><use href="#wrenchf"/></svg></button><button class="blu" aria-label="Particles"><svg class="ic"><use href="#part"/></svg></button><button class="blu" aria-label="Physics"><svg class="ic"><use href="#phys"/></svg></button><button class="blu" aria-label="Constraints"><svg class="ic"><use href="#cons"/></svg></button><button class="grn" aria-label="Data"><svg class="ic"><use href="#mesh"/></svg></button><button class="redm on" aria-label="Material"><svg class="ic"><use href="#mat"/></svg></button></div>
      <svg class="ch dn"><use href="#chev"/></svg>
    </nav>
    <div class="pmain">
      <h2><svg class="ic"><use href="#obj"/></svg><span>Plane</span><i class="sp"></i><svg class="ic dim"><use href="#pin"/></svg></h2>
      <div class="slots"><div class="list"><i class="sp"></i><div class="lf2"><svg class="ch"><use href="#play"/></svg><svg class="grip"><use href="#grip"/></svg><i></i></div></div>
        <div class="sbtn"><div class="pm"><button aria-label="Add slot"><svg class="ic"><use href="#plus"/></svg></button><button class="off" aria-label="Remove slot"><svg class="ic"><use href="#minus"/></svg></button></div><button class="b solo" aria-label="Slot options"><svg class="ch"><use href="#chev"/></svg></button></div></div>
      <div class="grp newm"><button class="ib" aria-label="Browse material"><svg class="ic"><use href="#mat"/></svg><svg class="ch"><use href="#chev"/></svg></button><button class="new"><svg class="ic"><use href="#plus"/></svg><span>New</span></button></div>
    </div>
  </div>
</section>
</div>
</main>

<footer class="status"><svg class="ic"><use href="#warn"/></svg><span>Active object has non-uniform scale</span><i class="rule"></i><svg class="ms"><use href="#m1"/></svg><span class="k">Select</span><svg class="ms"><use href="#m2"/></svg><span class="k">Rotate View</span><svg class="ms"><use href="#m3"/></svg><span class="k">Options</span><i class="sp"></i><span>5.0.0</span></footer>
<script src="script.js"></script>
</body>
</html>
```
FILE: styles.css
```css
* { box-sizing: border-box; }
html, body { height: 100%; margin: 0; }
body { display: flex; flex-direction: column; background: #181818; color: #dcdcdc; font: 11px/16px Inter, "Liberation Sans", sans-serif; font-feature-settings: "cv08", "tnum"; overflow: hidden; }
.defs { display: none; }
button, input, select { font: inherit; font-feature-settings: inherit; color: inherit; background: none; border: 0; padding: 0; margin: 0; }
input, select { min-width: 0; outline: 0; }
select { appearance: none; flex: 1; text-shadow: 0 1px 1px #0008; }
h1, h2, h3, h4, p, ul { margin: 0; padding: 0; font: inherit; list-style: none; }
i { font-style: normal; }
span, button, label, h2, h3, h4, p, li { text-shadow: 0 1px 1px #0006; white-space: nowrap; }
svg { flex: none; fill: none; stroke: currentColor; }
.ic { width: 16px; height: 16px; display: block; }
.ch { width: 10px; height: 10px; display: block; }
.dim { color: #8f8f8f; }
.sp { flex: 1; }
.sp.three { flex: 3; } .sp.four { flex: 4; } .sp.five { flex: 5; } .sp.seven { flex: 7; } .sp.eight { flex: 8; } .sp.nine { flex: 9; } .sp.eleven { flex: 11; } .sp.twelve { flex: 12; }

.title { flex: 0 0 24px; display: flex; align-items: center; padding: 0 10px 0 3px; }
.title h1 { margin-left: 5px; color: #fff; font: 12px/16px "Open Sans", sans-serif; white-space: nowrap; }
.title button { width: 46px; display: flex; justify-content: center; color: #fff; }
.title button:last-child { width: 30px; margin-left: 8px; }

.top { flex: 0 0 25px; display: flex; align-items: center; padding: 0 4px 1px 6px; }
.menus { display: flex; }
.menus button { padding: 0 8px; height: 20px; }
.top > .menus { margin-left: 1px; }
.rule { width: 1px; height: 20px; background: #3a3a3a; }
.top .rule { margin: 0 7px 0 8px; }
.tabs { display: flex; gap: 2px; }
.tabs button { height: 21px; padding: 0 10px; border-radius: 4px 4px 0 0; background: #1d1d1d; color: #979797; }
.tabs .on { background: #303030; color: #f0f0f0; }
.tabs .add { padding: 0 3px; }
.top .grp + .grp { margin-left: 7px; }

.grp { display: flex; height: 19px; border-radius: 4px; background: #282828; box-shadow: 0 0 0 1px #3d3d3d; overflow: hidden; gap: 1px; }
.ib { width: 30px; height: 19px; display: flex; align-items: center; justify-content: space-between; padding: 0 3px; }
.ib .ch, .dd .ch { width: 9px; height: 9px; }
.ib .ic { width: 15px; height: 15px; }
.box, .dd { background: #282828; border-radius: 4px; box-shadow: 0 0 0 1px #3d3d3d; height: 19px; }
.b { width: 18px; height: 19px; display: flex; align-items: center; justify-content: center; }
.b .ic { width: 15px; height: 15px; }
.top .b { width: 19px; }
.g { background: #545454; }
.on { background: #4772b3; color: #fff; }
.mut { background: #434343; color: #757575; }
.mut2 { color: #a0a0a0; }
.off { color: #555; }
.solo { border-radius: 4px; box-shadow: 0 0 0 1px #3d3d3d; background: #282828; width: 19px; }
.solo.g { background: #545454; }
.in { background: #1d1d1d; margin-left: -1px; }
.name { background: #1d1d1d; padding: 0 7px; }
.scene { width: 79px; }
.layer { width: 80px; }
.gname { width: 102px; padding: 0 6px; }
.dd { display: flex; align-items: center; padding: 0 5px; gap: 4px; }

main { flex: 1; min-height: 0; display: grid; grid-template-columns: minmax(0, 1fr) 339px; gap: 3px; padding: 0 2px; }
.left, .rightcol { display: flex; flex-direction: column; gap: 3px; min-height: 0; }
.upper { flex: 468 1 0; min-height: 0; display: grid; grid-template-columns: 454px minmax(0, 1fr); gap: 3px; }
.area { border: 1px solid #3c3c3c; border-radius: 6px; background: #303030; overflow: hidden; display: flex; flex-direction: column; position: relative; min-height: 0; }
.hd { flex: 0 0 26px; display: flex; align-items: center; padding: 0 8px 3px; gap: 7px; }
.hd .menus { margin-left: -2px; }
.hd .menus button { padding: 0 8px 0 7px; }

.sheetbody { flex: 1; display: flex; min-height: 0; }
.sheet aside { width: 158px; }
.sheet h2 { height: 24px; display: flex; align-items: center; padding: 0 8px 3px 13px; gap: 8px; }
.sheet h2.tall { height: 31px; padding: 3px 8px 0 13px; }
.sheet h2.tall .ic + span { margin-left: -1px; }
.sheet .sec { background: #2a2a2a; padding: 5px 8px; }
.sheet .sec .dd { background: #282828; padding-left: 7px; }
.sheet .sec li { height: 18px; margin-bottom: 4px; border-radius: 3px; display: flex; align-items: center; gap: 7px; padding: 0 5px; margin-right: 1px; }
.sheet li .ch { margin-right: -3px; margin-left: 1px; }
.sheet .geo { padding-top: 8px; padding-bottom: 3px; }
.sheet .dom { padding-top: 7px; padding-bottom: 6px; }
.sheet .sec .l2 { padding-left: 35px; position: relative; }
.sheet .sec .l1 { padding-left: 21px; }
.sheet .l2::before { content: ""; position: absolute; left: 11px; top: -2px; height: 22px; width: 1px; background: #4c4c4c; }
.sheet .sel { background: #4772b3; color: #fff; }
.sheet li b { margin-left: auto; font-weight: 400; color: #868686; }
.sheet .sel b { color: #b8c8e0; }
.sheet .no { color: #6e6e6e; }
.grid { flex: 1; display: flex; flex-direction: column; background: linear-gradient(#1d1d1d, #1d1d1d) 22px 0 / 1px 100% no-repeat, #333; }
.cols { height: 21px; border-bottom: 1px solid #1d1d1d; }
.rows { flex: 1; position: relative; margin-left: 23px; background: repeating-linear-gradient(#272727 0 20px, #2b2b2b 20px 40px); }
.sheet footer { flex: 0 0 26px; display: flex; justify-content: flex-end; align-items: center; gap: 12px; padding: 2px 9px 0; }
.bar { width: 1px; height: 12px; background: #ccc; }
.flap { width: 8px; height: 18px; display: flex; align-items: center; background: #252525; color: #aaa; border-radius: 4px; overflow: hidden; }
.flap.r { position: absolute; right: 0; top: 0; background: #333; }

.view { background: #3e3e3e; border-color: #555; }
.scene3d { position: absolute; inset: 0; width: 100%; height: 100%; }
.view > div { position: relative; }
.view > .hd { background: #343434e0; }
.mode { width: 110px; padding-left: 3px; }
.orient { width: 76px; padding-left: 3px; }
.hd2 { display: flex; }
.pl { height: 25px; padding: 3px 8px; background: #343434e0; border-radius: 0 0 5px 5px; }
.pl .b { width: 18px; }
.mid { display: flex; align-items: center; gap: 6px; padding: 0 8px 4px 12px; }
.opt { width: 65px; padding-left: 7px; }
.opt .ch { margin-left: auto; }
.vbody { flex: 1; display: flex; min-height: 0; padding: 0 3px 0 8px; }
.tools { display: flex; flex-direction: column; gap: 6px; padding-top: 9px; }
.tools div { display: grid; gap: 1px; border-radius: 4px; overflow: hidden; }
.tools button { width: 38px; height: 34px; background: #272727; display: grid; place-items: center; }
.tools .on { background: #4772b3; }
.tools svg { width: 32px; height: 32px; }
.tools .more, .tools .on { background-image: linear-gradient(135deg, #0000 50%, #999 50%); background-size: 5px 5px; background-repeat: no-repeat; background-position: 33px 28px; }
.info { margin: 7px 0 0 18px; font-weight: 500; color: #fff; line-height: 18px; }
.info p { text-shadow: 0 0 2px #000, 0 1px 2px #000; }
.nav { display: flex; flex-direction: column; align-items: flex-end; gap: 2px; padding-top: 10px; margin-right: 16px; }
.nav button { width: 28px; height: 28px; border-radius: 50%; background: #2b2b2b; display: grid; place-items: center; }
.gz { width: 84px; height: 80px; margin-bottom: -1px; stroke: none; }
.gz text { font-size: 11px; font-weight: 600; text-anchor: middle; }
.npanel { width: 244px; margin-top: 2px; align-self: flex-start; border: 1px solid #4a4a4a; border-radius: 4px; background: #3c3c3cf5; padding: 0 8px 8px; }
.npanel h2 { height: 29px; display: flex; align-items: center; gap: 5px; padding-bottom: 4px; }
.grip { width: 12px; height: 6px; color: #aaa; }
.npanel h3 { height: 24px; line-height: 27px; }
.vec { display: grid; grid-auto-rows: minmax(0, 1fr); height: 58px; gap: 1px; border-radius: 4px; overflow: hidden; flex: 1; background: #3c3c3c; }
.vec label { background: #545454; display: flex; align-items: center; padding: 0 13px 0 15px; }
.vec input, .fld input { flex: 1; width: 20px; text-align: right; }
.tri { display: flex; }
.locks { width: 52px; display: flex; flex-direction: column; justify-content: space-around; align-items: center; padding-left: 10px; color: #a4a4a4; }
.locks .ic { width: 15px; height: 15px; }
.euler { margin-top: 4px; height: 18px; padding-left: 7px; box-shadow: none; }
.vtabs { display: flex; flex-direction: column; gap: 4px; margin: 5px 0 0 7px; }
.vtabs button { flex: none; width: 17px; writing-mode: vertical-rl; padding: 8px 0 9px; line-height: 17px; background: #1d1d1d; border-radius: 4px; color: #989898; }
.vtabs .on { background: #303030; color: #fff; box-shadow: 0 0 0 1px #1d1d1d; }

.nodes { flex: 417 1 0; background: #1a1a1a; border-color: #303030; }
.nodes > .hd { flex-basis: 27px; padding-bottom: 1px; }
.modi { width: 83px; gap: 3px; padding: 0 4px; }
.canvas { flex: 1; position: relative; overflow: hidden; }
.wires { position: absolute; inset: 0; width: 100%; height: 100%; stroke: none; }
.crumb { position: relative; display: flex; align-items: center; padding: 13px 17px; gap: 7px; }
.crumb .ch { margin-left: 6px; width: 12px; }
.canvas .flap { position: absolute; top: 21px; }
.lf { left: 0; } .rt { right: 0; }
.node { position: absolute; width: 140px; background: #303030; border: 1px solid #4a4a4a; border-radius: 5px; }
.node h4 { height: 20px; margin: -1px -1px 3px; display: flex; align-items: center; padding-left: 12px; gap: 4px; border-radius: 5px 5px 0 0; }
.pink { background: #84324f; } .green { background: #1d725e; } .node .black { background: #1d1d1d; margin: 0 0 4px; height: 19px; padding-left: 11px; }
.node h4 + * { margin-top: 4px; }
.node p, .node .row { height: 22px; line-height: 22px; padding: 0 11px; position: relative; }
.node .o { text-align: right; padding-right: 9px; }
.node .o.first { padding-right: 11px; margin-bottom: 2px; }
.sk { position: absolute; left: -3px; top: 5px; width: 6px; height: 13px; background: var(--c); border: 1px solid #111; }
.o .sk { left: auto; right: -3px; }
.sk.di { width: 9px; height: 9px; top: 7px; left: -5px; transform: rotate(45deg); }
.o .sk.di { left: auto; right: -5px; }
.sk.ring { width: 11px; height: 11px; left: -6px; border-radius: 50%; background: none; border-color: #888; }
.n-obj { left: 478px; top: 75px; height: 208px; }
.n-grid { left: 713px; top: -6px; height: 162px; border-color: #e6e6e6; }
.n-inst { left: 1101px; top: 76px; }
.n-out { left: 1340px; top: 55px; height: 73px; }
.seg { display: flex; gap: 1px; margin: 6px 10px 1px; border-radius: 4px; overflow: hidden; }
.seg button { flex: 1 0 auto; height: 19px; background: #545454; padding: 0 5px; }
.seg .on { background: #4772b3; }
.pick { width: 118px; height: 18px; display: flex; align-items: center; gap: 6px; background: #1d1d1d; border-radius: 4px; box-shadow: 0 0 0 1px #3d3d3d; padding: 0 4px; line-height: 18px; }
.pick .ic { width: 15px; height: 15px; }
.node .row .pick { margin-top: 2px; }
.ck { display: flex; align-items: center; gap: 4px; height: 22px; }
.ck input { appearance: none; width: 13px; height: 13px; border-radius: 2px; background: #545454; }
.flds { padding-top: 2px; }
.fld { display: flex; align-items: center; height: 18px; background: #545454; border-radius: 4px; padding: 0 12px 0 15px; line-height: 18px; }
.node .flds .row { padding-top: 2px; }
.node .vec { margin: 1px 10px 2px 11px; }
.node .vec label { line-height: 18px; }
.sb { position: absolute; background: #ffffff1c; border-radius: 2px; }
.sb.v { right: 2px; top: 6px; bottom: 24px; width: 3px; }
.sb.h { left: 8px; right: 8px; bottom: 3px; height: 3px; }

.time { flex: 0 0 69px; }
.time .hd { flex-basis: 25px; padding-bottom: 1px; }
.time .menus { margin-left: -1px; }
.time .b { width: 19px; }
.play { width: 71px; padding: 0 4px 0 7px; }
.frame { width: 74px; height: 19px; background: #545454; border-radius: 4px; text-align: center; }
.rng label { display: flex; align-items: center; background: #545454; width: 88px; padding: 0 15px 0 16px; }
.rng label + label { width: 85px; padding: 0 14px 0 15px; }
.rng input { flex: 1; width: 20px; text-align: right; }
.tov { margin-left: 11px; }
.ruler { flex: 1; display: grid; grid-template-columns: repeat(21, minmax(0, 1fr)); padding: 0 11px 0 87px; background: linear-gradient(#ffffff14, #ffffff14) 10px 37px / calc(100% - 20px) 3px no-repeat, linear-gradient(#0004, #0004) 0 23px / 57px 20px no-repeat, linear-gradient(#1c1c1c 0 23px, #2d2d2d 23px); }
.ruler span { text-align: center; line-height: 25px; color: #8f8f8f; background: linear-gradient(#191919, #191919) 50% 23px / 1px 20px no-repeat, linear-gradient(#232323, #232323) 0 23px / 1px 20px no-repeat; }
.head { position: absolute; left: 46px; top: 27px; width: 24px; height: 20px; background: #4772b3; color: #fff; border-radius: 4px; }
.head::after { content: ""; position: absolute; left: 11px; top: 18px; width: 2px; height: 26px; background: #4772b3; }
.head::before { content: ""; position: absolute; left: 5px; top: 20px; border: 7px solid #0000; border-top: 6px solid #4772b3; border-bottom: 0; }
.tl { position: absolute; left: 0; bottom: 3px; }

.outliner { flex: 0 0 177px; background: #282828; }
.search { width: 118px; height: 19px; display: flex; align-items: center; gap: 6px; padding: 0 4px; background: #1d1d1d; border-radius: 4px; box-shadow: 0 0 0 1px #3d3d3d; }
.search input { flex: 1; }
.search input::placeholder { color: #7a7a7a; }
.outliner ul { flex: 1; margin-top: 1px; background: repeating-linear-gradient(#282828 0 20px, #2b2b2b 20px 40px); }
.outliner li { height: 20px; display: flex; align-items: center; padding-right: 10px; gap: 4px; color: #c0c0c0; }
.outliner .d0 { padding-left: 21px; gap: 7px; color: #bbb; }
.outliner .d0 .ic { color: #ddd; }
.outliner .d1 { padding-left: 25px; color: #eee; }
.outliner .d2 { padding-left: 45px; position: relative; }
.d2::before { content: ""; position: absolute; left: 29px; top: 0; width: 1px; height: 20px; background: #4c4c4c; }
.box2 { background: #ffffff30; border-radius: 4px; box-shadow: 0 0 0 2px #ffffff30; }
.outliner .ch + .ic { margin-left: 3px; }
.outliner span { margin-left: 2px; }
.w { color: #fff; }
.outliner .or { color: #cf8f60; } .gr { color: #00c79a; } .bl { color: #5f85dd; }
.m1 { margin-left: 18px; }
.hid .ch, .hid > span { color: #757575; } .outliner .hid .or { color: #7d5a3e; } .hid .gr { color: #12795f; } .hid .cm { color: #ccc; }
.outliner .sel { background: #334d80; box-shadow: inset 0 0 0 1px #5679b8; margin: 1px 2px 0 3px; padding-left: 42px; padding-right: 8px; height: 18px; }
.outliner .sel::before { left: 26px; }
.act { color: #ffaf29; }
.tick { appearance: none; width: 11px; height: 11px; margin-right: 4px; border-radius: 2px; background: #e6e6e6; position: relative; }
.tick::after { content: ""; position: absolute; left: 4px; top: 1px; width: 3px; height: 6px; border: solid #222; border-width: 0 2px 2px 0; transform: rotate(45deg); }

.propsed { flex: 1; }
.propsed .hd { flex-basis: 25px; padding-bottom: 2px; }
.pbody { flex: 1; display: flex; min-height: 0; }
.ptabs { width: 28px; background: #181818; padding: 7px 0 0 2px; display: flex; flex-direction: column; gap: 8px; }
.ptabs div { display: flex; flex-direction: column; background: #1d1d1d; border-radius: 4px 0 0 4px; }
.ptabs button { height: 28px; display: grid; place-items: center; color: #a8a8a8; border-radius: 4px 0 0 4px; }
.ptabs .on { background: #303030; }
.ptabs .red { color: #b3535c; } .ptabs .redm { color: #d1636b; } .ptabs .wh { color: #ddd; } .ptabs .org { color: #c5824f; } .ptabs .blu { color: #5f85d6; } .ptabs .grn { color: #00ad85; }
.dn { align-self: center; color: #555; margin-top: 4px; }
.pmain { flex: 1; padding: 8px 9px 0; }
.pmain h2 { display: flex; align-items: center; gap: 9px; height: 18px; padding-right: 1px; }
.slots { display: flex; gap: 9px; margin-top: 17px; height: 79px; }
.list { flex: 1; display: flex; flex-direction: column; background: #262626; border-radius: 4px; box-shadow: inset 0 0 0 1px #3d3d3d; }
.lf2 { display: flex; justify-content: space-between; align-items: center; height: 20px; padding: 0 9px; color: #aaa; }
.sbtn { display: flex; flex-direction: column; gap: 7px; }
.pm { border-radius: 4px; overflow: hidden; display: grid; background: #404040; }
.pm button { width: 19px; height: 19px; display: grid; place-items: center; background: #545454; }
.pm .off { background: #404040; color: #777; }
.newm { margin-top: 6px; }
.new { flex: 1; display: flex; align-items: center; background: #545454; padding: 0 3px; }
.new span { flex: 1; text-align: center; }

.status { flex: 0 0 23px; display: flex; align-items: center; padding: 0 12px; color: #9b9b9b; }
.status .ic { margin-right: 1px; }
.status .rule { margin: 0 7px 0 8px; }
.ms { width: 12px; height: 16px; }
.k { margin: 0 10px 0 2px; }
```
FILE: script.js
```js
// Draws the 30 x 40 block array seen in perspective.
const COLS = 30, ROWS = 40;
const base = c => [544 + 21.8 * c, 454 - 0.15 * c];
const far = c => [650 + 16.7 * c, 138 - 0.17 * c];
const floorY = c => 472 - 0.29 * c;
const depth = t => 1.28 * t / (1.28 * t + 1 - t);
const at = (c, t) => {
  const s = depth(t), a = base(c), b = far(c);
  return [a[0] + (b[0] - a[0]) * s, a[1] + (b[1] - a[1]) * s];
};
let grey = '', edges = '', zig = '';
for (let c = 0; c < COLS; c++) {
  const p = 0.03 + 0.62 * c / (COLS - 1);
  const drop = Math.min(1, p * 1.6) * 11;
  const near0 = at(c, 0), near1 = at(c + p, 0), far0 = at(c, 1), far1 = at(c + p, 1);
  // The lit side faces only show once they turn far enough towards the viewer.
  if (c > 8) {
    const q = Math.min(1, (c - 6) / 10);
    const inner = at(c + p * (1 - q), 0);
    grey += `M${far0[0]} ${far0[1] + drop}L${far1}L${near1}L${near1[0] - 2} ${floorY(c) - 7}L${inner[0] + 2} ${floorY(c) - 2}Z`;
  }
  edges += `M${far0[0]} ${far0[1] + drop}L${near0[0]} ${near0[1] + drop}V${floorY(c)}`;
  for (let r = 0; r < ROWS; r++) {
    const t = r / (ROWS - 1);
    const a = at(c, t), m = at(c + p, t), b = at(c + 1, t);
    zig += `M${a[0]} ${a[1] + drop}L${m}L${b[0]} ${b[1] + 8 + 3 * p}`;
  }
}
const hull = 'M650 138L1145 133L1151 143L1198 463L544 472V458Z';
document.getElementById('mesh3d').innerHTML =
  `<path d="${hull}" fill="#413c3e" stroke="none"/>` +
  `<path d="${grey}" fill="#969492" stroke="none"/>` +
  `<path d="${zig}" fill="none" stroke="#f79530" stroke-width="1.800" stroke-linejoin="round"/>` +
  `<path d="${edges}" fill="none" stroke="#ff9d33" stroke-width="2.200"/>` +
  `<path d="M1151 141L1198 456V463.500L544 472" fill="none" stroke="#ff9d33" stroke-width="2"/>`;
```
